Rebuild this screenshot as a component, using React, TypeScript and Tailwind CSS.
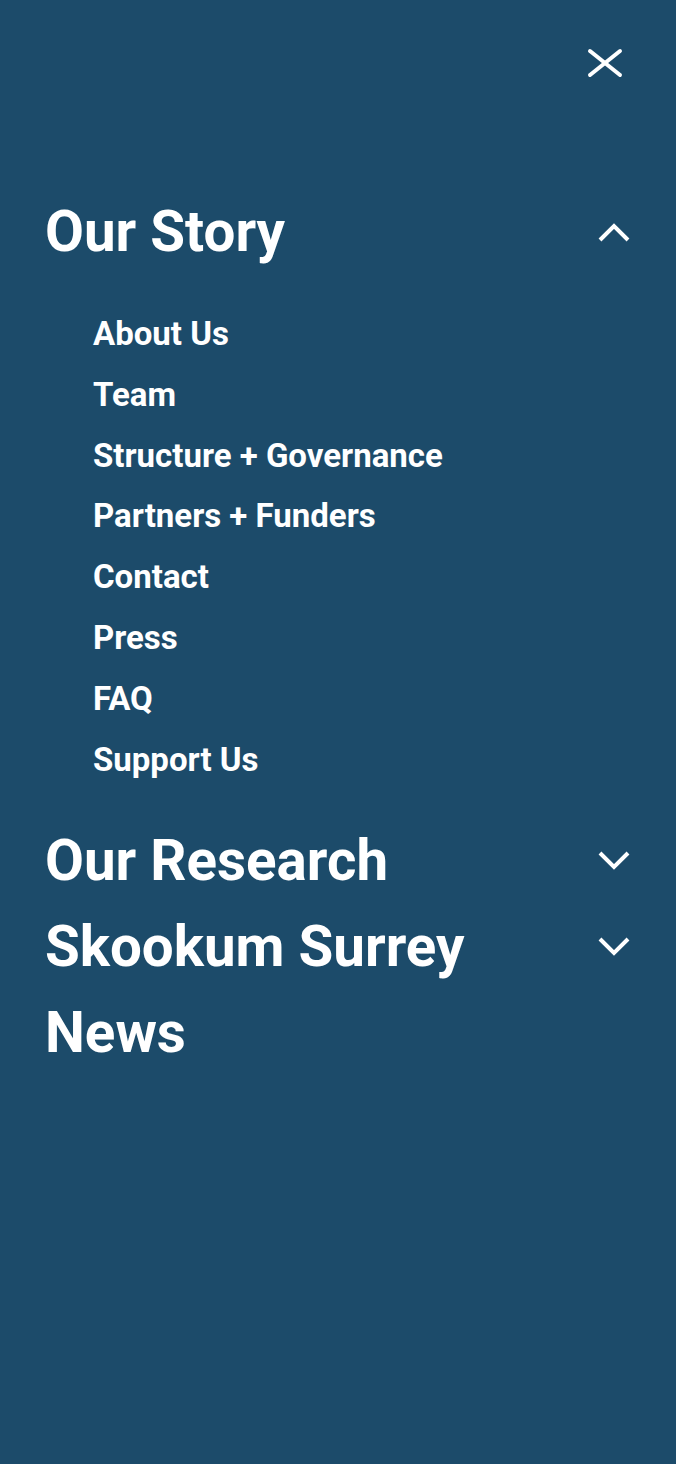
import React from "react";

const subLinks = [
  "About Us",
  "Team",
  "Structure + Governance",
  "Partners + Funders",
  "Contact",
  "Press",
  "FAQ",
  "Support Us",
];

function Chevron({ up }: { up?: boolean }) {
  return (
    <svg width="34" height="22" viewBox="0 0 34 22" fill="none" className="shrink-0">
      <polyline
        points={up ? "3,19 17,5 31,19" : "3,3 17,17 31,3"}
        stroke="white"
        strokeWidth="4"
        strokeLinejoin="miter"
      />
    </svg>
  );
}

function MenuRow({ label, icon }: { label: string; icon?: "up" | "down" }) {
  return (
    <div className="flex h-[86px] items-center justify-between">
      <a href="#" className="text-[56.5px] leading-[86px] font-bold text-white">
        {label}
      </a>
      {icon && <Chevron up={icon === "up"} />}
    </div>
  );
}

export default function App() {
  return (
    <div
      className="min-h-[1464px] w-full bg-[#1c4b6a] pl-[45px] pr-[45px]"
      style={{ fontFamily: "Roboto, 'Liberation Sans', sans-serif" }}
    >
      <div className="flex justify-end pt-[48px] pr-[8px]">
        <button aria-label="Close menu" className="p-0">
          <svg width="36" height="30" viewBox="0 0 36 30" fill="none">
            <line x1="3" y1="3" x2="33" y2="27" stroke="white" strokeWidth="4" strokeLinecap="round" />
            <line x1="33" y1="3" x2="3" y2="27" stroke="white" strokeWidth="4" strokeLinecap="round" />
          </svg>
        </button>
      </div>

      <nav className="mt-[111px]">
        <MenuRow label="Our Story" icon="up" />
        <ul className="mt-[29px] mb-[28px] pl-[48px]">
          {subLinks.map((l) => (
            <li key={l} className="text-[33px] leading-[60.8px] font-bold text-white">
              <a href="#">{l}</a>
            </li>
          ))}
        </ul>
        <MenuRow label="Our Research" icon="down" />
        <MenuRow label="Skookum Surrey" icon="down" />
        <MenuRow label="News" />
      </nav>
    </div>
  );
}
